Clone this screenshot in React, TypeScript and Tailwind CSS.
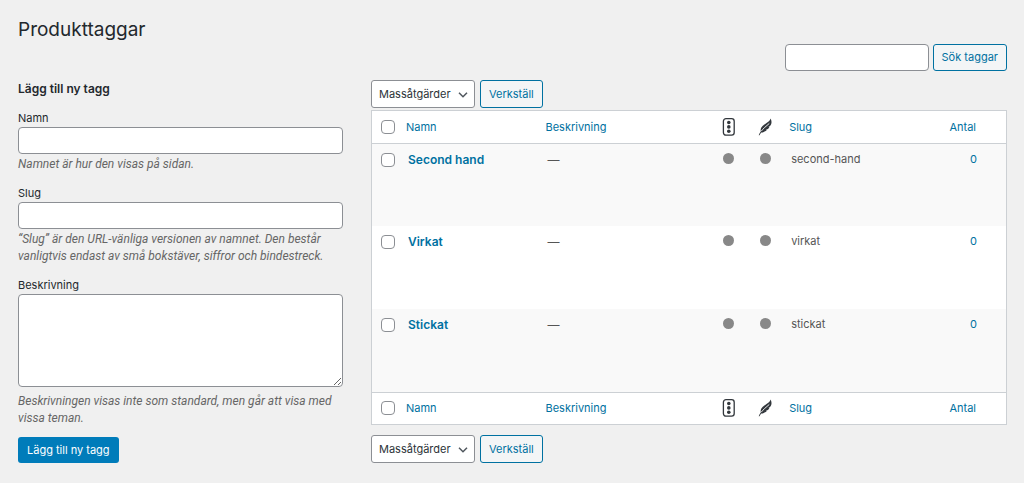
import { useState } from 'react'
import type { ReactNode } from 'react'
import { clsx } from 'clsx'

interface Tag {
  id: number
  name: string
  slug: string
  count: number
}

const TAGS: Tag[] = [
  { id: 1, name: 'Second hand', slug: 'second-hand', count: 0 },
  { id: 2, name: 'Virkat', slug: 'virkat', count: 0 },
  { id: 3, name: 'Stickat', slug: 'stickat', count: 0 },
]

const fieldClass = 'block w-full rounded-[4px] border border-[#8c8f94] bg-white px-2 text-[11px] text-[#2c3338]'

function SeoIcon() {
  return (
    <svg viewBox="0 0 14 20" className="mx-auto h-5 w-3.5" role="img" aria-label="SEO-poäng">
      <rect x="1.4" y="1.6" width="10.8" height="16.6" rx="2.6" fill="none" stroke="#32373c" strokeWidth="1.3" />
      <circle cx="6.8" cy="5.5" r="1.8" fill="#32373c" />
      <circle cx="6.8" cy="9.9" r="1.8" fill="#32373c" />
      <circle cx="6.8" cy="14.3" r="1.8" fill="#32373c" />
    </svg>
  )
}

function FeatherIcon() {
  return (
    <svg viewBox="0 0 16 20" className="mx-auto h-5 w-4" role="img" aria-label="Läsbarhetspoäng">
      <path
        d="M12.6 1.5C12.2 3.500 10.600 4.600 8.500 6 5.600 8 3 9.800 2.700 12.400c-.1.900 0 1.500.1 2.100C1.900 15.500 1.200 16.700.7 18.200l.8.100c.5-1 1.100-1.900 1.800-2.700 2-.1 4-1 5.500-2.500l-1.100-.1c1.500-.5 2.900-1.500 3.700-2.800l-1-.1c1.400-.8 2.500-1.900 2.900-3.300.5-1.900.1-3.900-.7-5.300z"
        fill="#32373c"
      />
      <path d="M3.300 14.100C5 11.600 8.200 9.300 11.300 6.400" fill="none" stroke="#fff" strokeWidth=".9" />
    </svg>
  )
}

function ScoreDot({ label }: { label: string }) {
  return <span role="img" aria-label={label} className="mx-auto mt-[9px] block size-[11px] rounded-full bg-[#888]" />
}

function OutlineButton({ children, className }: { children: ReactNode; className?: string }) {
  return (
    <button
      type="button"
      className={clsx(
        'rounded-[3px] border border-[#0071a1] bg-[#f3f5f6] px-2 text-[11px] whitespace-nowrap text-[#0071a1]',
        className,
      )}
    >
      {children}
    </button>
  )
}

function BulkActions({ id }: { id: string }) {
  return (
    <div className="flex gap-[5px]">
      <div className="relative">
        <select
          id={id}
          aria-label="Välj massåtgärd"
          className="block h-7 w-[104px] appearance-none rounded-[3px] border border-[#8c8f94] bg-white pl-[7px] text-[11px] text-[#2c3338]"
        >
          <option>Massåtgärder</option>
        </select>
        <svg viewBox="0 0 10 6" className="pointer-events-none absolute top-3 right-[7px] h-1.5 w-2.5" aria-hidden>
          <path d="M1 .8l4 4 4-4" fill="none" stroke="#50575e" strokeWidth="1.5" />
        </svg>
      </div>
      <OutlineButton className="h-7">Verkställ</OutlineButton>
    </div>
  )
}

function Checkbox({ label, checked, onChange }: { label: string; checked: boolean; onChange: () => void }) {
  return (
    <input
      type="checkbox"
      aria-label={label}
      checked={checked}
      onChange={onChange}
      className="block size-3.5 appearance-none rounded-[4px] border border-[#8c8f94] bg-white checked:bg-[#0071a1]"
    />
  )
}

interface HeadingRowProps {
  checked: boolean
  onToggle: () => void
}

function HeadingRow({ checked, onToggle }: HeadingRowProps) {
  return (
    <tr className="h-8 text-left text-[11px] text-[#0071a1]">
      <th className="pl-[9px]">
        <Checkbox label="Markera alla" checked={checked} onChange={onToggle} />
      </th>
      <th className="pl-2 font-normal">
        <a href="#namn">Namn</a>
      </th>
      <th className="pl-2 font-normal">
        <a href="#beskrivning">Beskrivning</a>
      </th>
      <th>
        <SeoIcon />
      </th>
      <th>
        <FeatherIcon />
      </th>
      <th className="pl-[5px] font-normal">
        <a href="#slug">Slug</a>
      </th>
      <th className="pr-[30px] text-right font-normal">
        <a href="#antal">Antal</a>
      </th>
    </tr>
  )
}

function TagTable() {
  const [selected, setSelected] = useState<number[]>([])
  const allSelected = selected.length === TAGS.length

  const toggle = (id: number) => {
    setSelected((current) => (current.includes(id) ? current.filter((item) => item !== id) : [...current, id]))
  }

  const toggleAll = () => {
    setSelected(allSelected ? [] : TAGS.map((tag) => tag.id))
  }

  return (
    <div className="border border-[#ccd0d4] bg-white">
      <table className="w-full table-fixed">
        <colgroup>
          <col className="w-[26px]" />
          <col className="w-[22%]" />
          <col />
          <col className="w-[37px]" />
          <col className="w-[37px]" />
          <col className="w-[18%]" />
          <col className="w-[17%]" />
        </colgroup>
        <thead className="border-b border-[#ccd0d4]">
          <HeadingRow checked={allSelected} onToggle={toggleAll} />
        </thead>
        <tbody>
          {TAGS.map((tag) => (
            <tr key={tag.id} className="h-[83px] align-top text-[11px] leading-4 text-[#555] odd:bg-[#f9f9f9]">
              <td className="pt-[9px] pl-[9px]">
                <Checkbox
                  label={`Välj ${tag.name}`}
                  checked={selected.includes(tag.id)}
                  onChange={() => toggle(tag.id)}
                />
              </td>
              <td className="pt-2 pl-2.5 text-[12px] font-semibold text-[#0071a1]">
                <a href={`#${tag.slug}`}>{tag.name}</a>
              </td>
              <td className="pt-2 pl-2.5 text-[12px]">—</td>
              <td>
                <ScoreDot label="SEO: ej tillgängligt" />
              </td>
              <td>
                <ScoreDot label="Läsbarhet: ej tillgängligt" />
              </td>
              <td className="pt-[7px] pl-[7px]">{tag.slug}</td>
              <td className="pt-[7px] pr-[29px] text-right text-[#0071a1]">
                <a href={`#antal-${tag.slug}`}>{tag.count}</a>
              </td>
            </tr>
          ))}
        </tbody>
        <tfoot className="border-t border-[#ccd0d4]">
          <HeadingRow checked={allSelected} onToggle={toggleAll} />
        </tfoot>
      </table>
    </div>
  )
}

interface FieldProps {
  id: string
  label: string
  help: string
  multiline?: boolean
}

function Field({ id, label, help, multiline = false }: FieldProps) {
  return (
    <div>
      <label htmlFor={id} className="mb-px block text-[11px] leading-4">
        {label}
      </label>
      {multiline ? (
        <textarea id={id} className={clsx(fieldClass, 'mb-1.5 h-[93px] py-1')} />
      ) : (
        <input id={id} type="text" className={clsx(fieldClass, 'mb-0.5 h-[27px]')} />
      )}
      <p className="font-['Roboto','Liberation_Sans',sans-serif] text-[12px] leading-[17px] text-[#666] italic">
        {help}
      </p>
    </div>
  )
}

function AddTagForm() {
  return (
    <form onSubmit={(event) => event.preventDefault()}>
      <h2 className="mb-3 text-[12px] leading-[18px] font-semibold">Lägg till ny tagg</h2>
      <div className="flex flex-col gap-3">
        <Field id="tag-name" label="Namn" help="Namnet är hur den visas på sidan." />
        <Field
          id="tag-slug"
          label="Slug"
          help="“Slug” är den URL-vänliga versionen av namnet. Den består vanligtvis endast av små bokstäver, siffror och bindestreck."
        />
        <Field
          id="tag-description"
          label="Beskrivning"
          help="Beskrivningen visas inte som standard, men går att visa med vissa teman."
          multiline
        />
      </div>
      <button type="submit" className="mt-2.5 h-[26px] rounded-[3px] bg-[#007cba] px-[9px] text-[11px] text-white">
        Lägg till ny tagg
      </button>
    </form>
  )
}

export default function App() {
  return (
    <main className="min-h-screen bg-[#f0f0f0] pt-4 pr-[17px] pb-5 pl-[18px] font-['Inter','Liberation_Sans',sans-serif] text-[#23282d]">
      <h1 className="text-[19px] leading-7">Produkttaggar</h1>
      <form className="flex justify-end gap-1" role="search" onSubmit={(event) => event.preventDefault()}>
        <div className="w-36">
          <input type="search" aria-label="Sök taggar" className={clsx(fieldClass, 'h-[27px]')} />
        </div>
        <OutlineButton className="h-[27px]">Sök taggar</OutlineButton>
      </form>
      <div className="mt-[9px] grid grid-cols-[325fr_636fr] gap-7">
        <AddTagForm />
        <section>
          <BulkActions id="bulk-top" />
          <div className="mt-0.5 mb-2.5">
            <TagTable />
          </div>
          <BulkActions id="bulk-bottom" />
        </section>
      </div>
    </main>
  )
}
